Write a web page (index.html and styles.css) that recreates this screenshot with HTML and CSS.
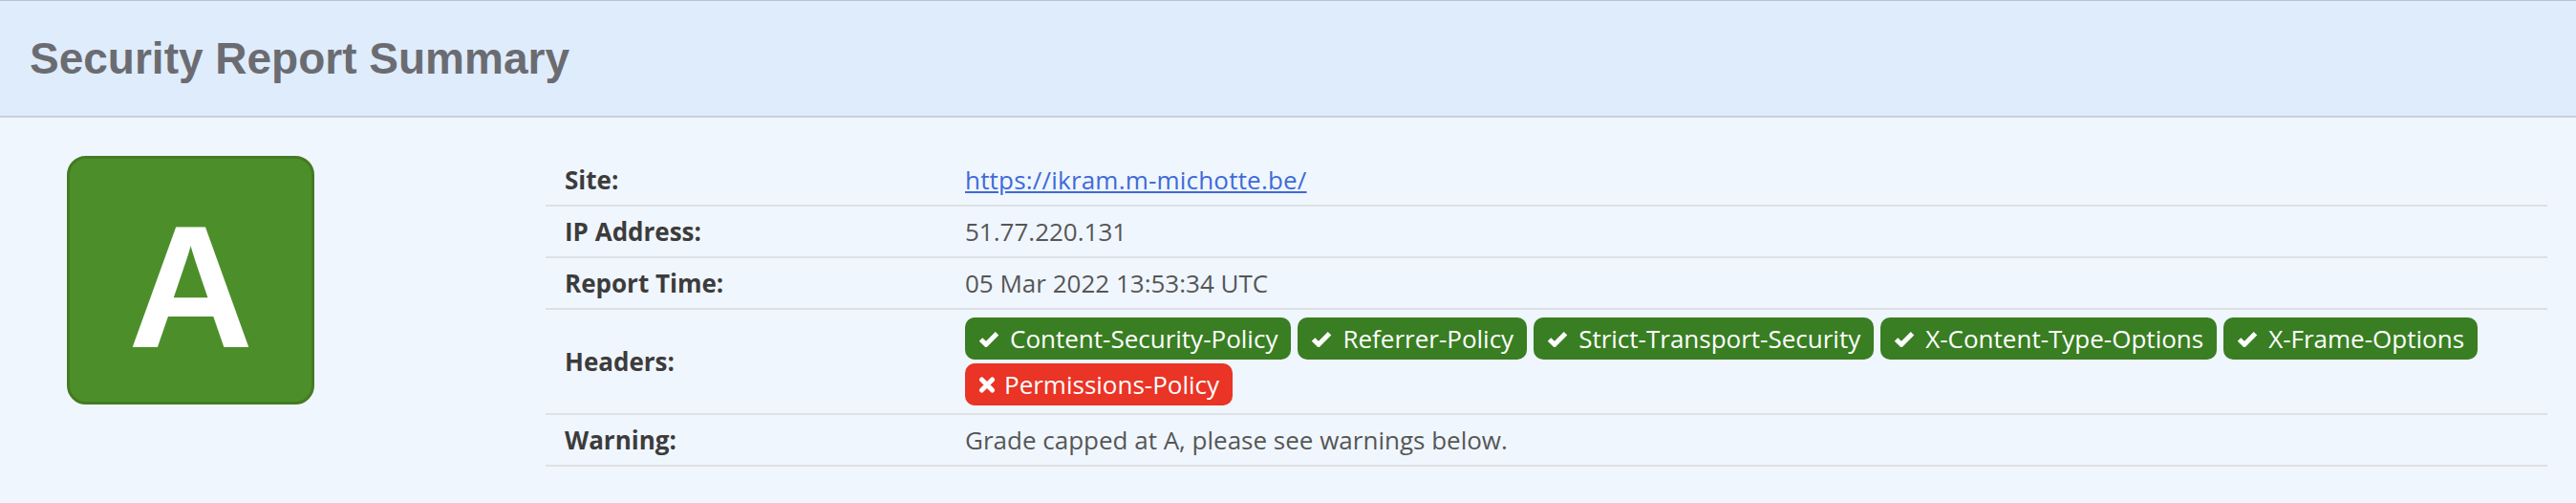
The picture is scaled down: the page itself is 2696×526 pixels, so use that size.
FILE: index.html
```html
<!DOCTYPE html>
<html lang="en">
<head>
<meta charset="utf-8">
<title>Security Report Summary</title>
<link rel="stylesheet" href="styles.css">
</head>
<body>
<section class="report">
  <header class="report-title">
    <h1>Security Report Summary</h1>
  </header>
  <div class="report-body">
    <div class="grade-col">
      <div class="grade">A</div>
    </div>
    <div class="report-table">
      <div class="row">
        <div class="label">Site:</div>
        <div class="value"><a class="site-link" href="#">https://ikram.m-michotte.be/</a></div>
      </div>
      <div class="row">
        <div class="label">IP Address:</div>
        <div class="value">51.77.220.131</div>
      </div>
      <div class="row">
        <div class="label">Report Time:</div>
        <div class="value">05 Mar 2022 13:53:34 UTC</div>
      </div>
      <div class="row row-headers">
        <div class="label">Headers:</div>
        <div class="value badges">
          <span class="badge ok"><svg class="ico-check" viewBox="0 0 22 17"><path d="M2.5 9 L8 14.3 L19.5 2.8" /></svg>Content-Security-Policy</span>
          <span class="badge ok"><svg class="ico-check" viewBox="0 0 22 17"><path d="M2.5 9 L8 14.3 L19.5 2.8" /></svg>Referrer-Policy</span>
          <span class="badge ok"><svg class="ico-check" viewBox="0 0 22 17"><path d="M2.5 9 L8 14.3 L19.5 2.8" /></svg>Strict-Transport-Security</span>
          <span class="badge ok"><svg class="ico-check" viewBox="0 0 22 17"><path d="M2.5 9 L8 14.3 L19.5 2.8" /></svg>X-Content-Type-Options</span>
          <span class="badge ok"><svg class="ico-check" viewBox="0 0 22 17"><path d="M2.5 9 L8 14.3 L19.5 2.8" /></svg>X-Frame-Options</span>
          <span class="badge bad"><svg class="ico-x" viewBox="0 0 18 17"><path d="M3.5 3 L14.5 14 M14.5 3 L3.5 14" /></svg>Permissions-Policy</span>
        </div>
      </div>
      <div class="row">
        <div class="label">Warning:</div>
        <div class="value">Grade capped at A, please see warnings below.</div>
      </div>
    </div>
  </div>
</section>
</body>
</html>
```

FILE: styles.css
```css
* { box-sizing: border-box; }

html, body {
  margin: 0;
  padding: 0;
  background: #f0f6fe;
}

body {
  font-family: "Open Sans", "Noto Sans", sans-serif;
  width: 2696px;
  height: 526px;
  overflow: hidden;
}

.report-title {
  height: 123px;
  background: #dfecfc;
  border-top: 1px solid #b8c4ce;
  border-bottom: 2px solid #c7d0d8;
  display: flex;
  align-items: center;
  padding: 0 31px;
}

.report-title h1 {
  margin: 0;
  font-family: "Liberation Sans", Arial, sans-serif;
  font-weight: bold;
  font-size: 46px;
  color: #6b6c71;
}

.report-body {
  display: grid;
  grid-template-columns: 571px 1fr;
  padding: 40px 30px 0 0;
}

.grade-col {
  padding-left: 70px;
}

.grade {
  width: 259px;
  height: 260px;
  border: 3px solid #437b23;
  border-radius: 20px;
  background: #4c8f2a;
  color: #ffffff;
  font-family: "Liberation Sans", Arial, sans-serif;
  font-weight: bold;
  font-size: 181px;
  line-height: 1;
  display: flex;
  align-items: center;
  justify-content: center;
  padding-top: 14px;
}

.report-table {
  margin-top: -1px;
}

.row {
  display: grid;
  grid-template-columns: 419px 1fr;
  align-items: center;
  min-height: 54px;
  border-bottom: 2px solid #dee0e3;
  font-size: 26px;
}

.label {
  padding-left: 20px;
  font-weight: 700;
  color: #3c3c3c;
}

.value {
  padding-left: 20px;
  color: #565656;
}

.site-link {
  color: #3e6bd8;
  text-decoration: underline;
  letter-spacing: 0.2px;
}

.row-headers {
  min-height: 110px;
}

.badges {
  display: flex;
  flex-wrap: wrap;
  gap: 4px 7px;
  padding-top: 8px;
  padding-bottom: 8px;
}

.badge {
  display: inline-flex;
  align-items: center;
  gap: 11px;
  height: 44px;
  padding: 0 14px 0 14px;
  border-radius: 10px;
  color: #ffffff;
  font-size: 26px;
  white-space: nowrap;
}

.badge.ok { background: #397e22; }
.badge.bad { background: #e93426; gap: 9px; }

.ico-check {
  width: 22px;
  height: 17px;
  fill: none;
  stroke: #ffffff;
  stroke-width: 5;
  stroke-linecap: butt;
  stroke-linejoin: miter;
}

.ico-x {
  width: 18px;
  height: 17px;
  fill: none;
  stroke: #ffffff;
  stroke-width: 5;
  stroke-linecap: round;
}
```
